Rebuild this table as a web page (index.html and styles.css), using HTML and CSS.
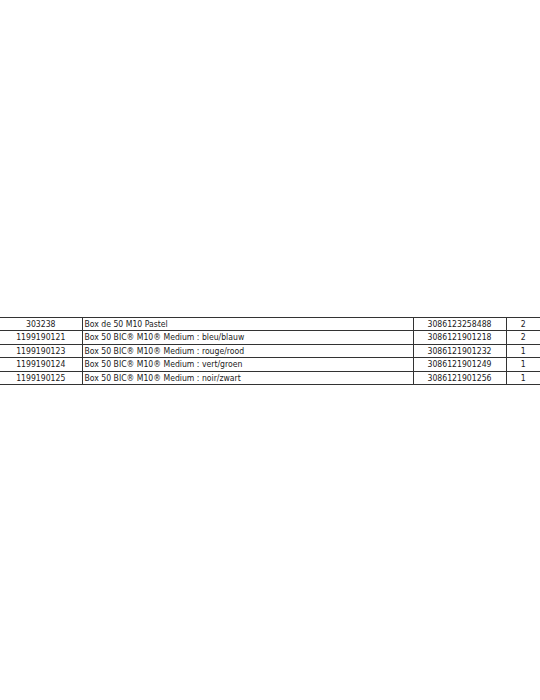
FILE: index.html
```html
<!DOCTYPE html>
<html>
<head>
<meta charset="utf-8">
<link rel="stylesheet" href="styles.css">
</head>
<body>
<table class="list">
  <colgroup>
    <col class="c-ref">
    <col class="c-desc">
    <col class="c-ean">
    <col class="c-qty">
  </colgroup>
  <tr><td class="ctr">303238</td><td>Box de 50 M10 Pastel</td><td class="ctr">3086123258488</td><td class="ctr">2</td></tr>
  <tr><td class="ctr">1199190121</td><td>Box 50 BIC® M10® Medium : bleu/blauw</td><td class="ctr">3086121901218</td><td class="ctr">2</td></tr>
  <tr><td class="ctr">1199190123</td><td>Box 50 BIC® M10® Medium : rouge/rood</td><td class="ctr">3086121901232</td><td class="ctr">1</td></tr>
  <tr><td class="ctr">1199190124</td><td>Box 50 BIC® M10® Medium : vert/groen</td><td class="ctr">3086121901249</td><td class="ctr">1</td></tr>
  <tr><td class="ctr">1199190125</td><td>Box 50 BIC® M10® Medium : noir/zwart</td><td class="ctr">3086121901256</td><td class="ctr">1</td></tr>
</table>
</body>
</html>
```
FILE: styles.css
```css
html, body {
  margin: 0;
  padding: 0;
  background: #fff;
}
body {
  padding-top: 317px;
  font-family: "DejaVu Sans Condensed", "Liberation Sans", sans-serif;
  color: #1a1a1a;
}
.list {
  width: 540px;
  border-collapse: collapse;
  table-layout: fixed;
  font-size: 8.6px;
}
.c-ref { width: 82px; }
.c-desc { width: 331px; }
.c-ean { width: 93px; }
.c-qty { width: 34px; }
.list td {
  border: 1px solid #333;
  height: 12.4px;
  padding: 0 2px;
  line-height: 12.4px;
  white-space: nowrap;
  overflow: hidden;
}
.list tr td:first-child { border-left: none; }
.list tr td:last-child { border-right: none; }
.list .ctr { text-align: center; }
```
